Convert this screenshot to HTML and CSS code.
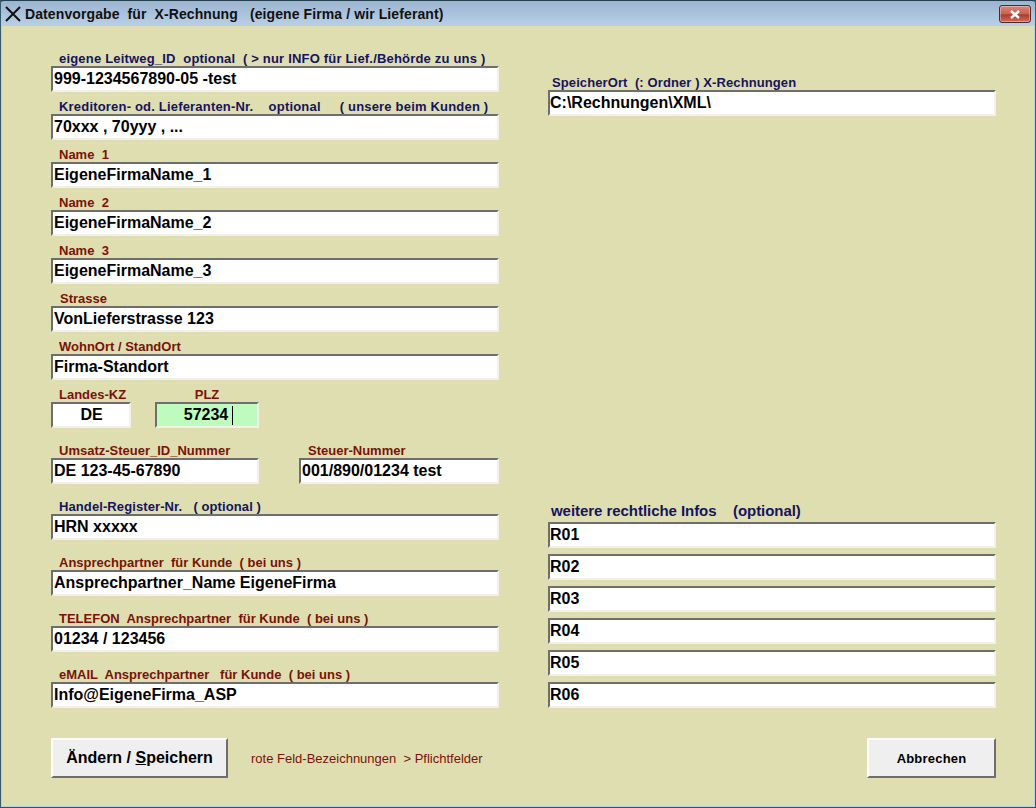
FILE: index.html
```html
<!DOCTYPE html>
<html lang="de">
<head>
<meta charset="utf-8">
<title>Datenvorgabe für X-Rechnung</title>
<link rel="stylesheet" href="styles.css">
</head>
<body>
<div class="window">
  <header class="titlebar">
    <svg class="app-icon" width="18" height="18" viewBox="0 0 18 18"><path d="M2 2 L16 16 M16 2 L2 16" stroke="#111" stroke-width="2" fill="none"/></svg>
    <span class="title">Datenvorgabe  für  X-Rechnung   (eigene Firma / wir Lieferant)</span>
    <div class="close"><svg width="14" height="9" viewBox="0 0 14 9"><path d="M3 1 L11 8 M11 1 L3 8" stroke="#fff" stroke-width="2.4" fill="none"/></svg></div>
  </header>
  <main class="client">
    <div class="columns">
      <section class="col">
        <div class="group"><label class="lbl opt">eigene Leitweg_ID  optional  ( &gt; nur INFO für Lief./Behörde zu uns )</label><div class="field">999-1234567890-05 -test</div></div>
        <div class="group"><label class="lbl opt">Kreditoren- od. Lieferanten-Nr.    optional     ( unsere beim Kunden )</label><div class="field">70xxx , 70yyy , ...</div></div>
        <div class="group"><label class="lbl req">Name  1</label><div class="field">EigeneFirmaName_1</div></div>
        <div class="group"><label class="lbl req">Name  2</label><div class="field">EigeneFirmaName_2</div></div>
        <div class="group"><label class="lbl req">Name  3</label><div class="field">EigeneFirmaName_3</div></div>
        <div class="group"><label class="lbl req nudge">Strasse</label><div class="field">VonLieferstrasse 123</div></div>
        <div class="group"><label class="lbl req">WohnOrt / StandOrt</label><div class="field">Firma-Standort</div></div>
        <div class="row row-plz">
          <div class="group w-land"><label class="lbl req">Landes-KZ</label><div class="field center">DE</div></div>
          <div class="group w-plz"><label class="lbl req center-lbl">PLZ</label><div class="field center active">57234<span class="caret"></span></div></div>
        </div>
        <div class="row row-ust spaced">
          <div class="group w-ust"><label class="lbl req">Umsatz-Steuer_ID_Nummer</label><div class="field">DE 123-45-67890</div></div>
          <div class="group w-st"><label class="lbl req nudge">Steuer-Nummer</label><div class="field">001/890/01234 test</div></div>
        </div>
        <div class="group spaced"><label class="lbl opt tight">Handel-Register-Nr.   ( optional )</label><div class="field">HRN xxxxx</div></div>
        <div class="group spaced"><label class="lbl req">Ansprechpartner  für Kunde  ( bei uns )</label><div class="field">Ansprechpartner_Name EigeneFirma</div></div>
        <div class="group spaced"><label class="lbl req">TELEFON  Ansprechpartner  für Kunde  ( bei uns )</label><div class="field">01234 / 123456</div></div>
        <div class="group spaced"><label class="lbl req">eMAIL  Ansprechpartner   für Kunde  ( bei uns )</label><div class="field">Info@EigeneFirma_ASP</div></div>
      </section>
      <section class="col col-right">
        <div class="group store"><label class="lbl opt tight nudge-s">SpeicherOrt  (: Ordner ) X-Rechnungen</label><div class="field field-r">C:\Rechnungen\XML\</div></div>
        <div class="legal">
          <h2 class="legal-head">weitere rechtliche Infos    (optional)</h2>
          <div class="legal-list">
            <div class="field field-r">R01</div>
            <div class="field field-r">R02</div>
            <div class="field field-r">R03</div>
            <div class="field field-r">R04</div>
            <div class="field field-r">R05</div>
            <div class="field field-r">R06</div>
          </div>
        </div>
      </section>
    </div>
    <footer class="actions">
      <button class="btn btn-save" type="button">Ändern / <u>S</u>peichern</button>
      <span class="hint">rote Feld-Bezeichnungen  &gt; Pflichtfelder</span>
      <button class="btn btn-cancel" type="button">Abbrechen</button>
    </footer>
  </main>
</div>
</body>
</html>
```

FILE: styles.css
```css
* { box-sizing: border-box; }
html, body { margin: 0; padding: 0; }
body { width: 1036px; height: 808px; overflow: hidden; font-family: "Liberation Sans", Arial, sans-serif; background: #2f5a6a; }
.window { width: 1036px; height: 808px; display: flex; flex-direction: column; border-top: 1px solid #24404f; background: linear-gradient(#9db4cf, #b9d1e8 26px); border-radius: 3px 3px 0 0; padding: 0 2px 2px 2px; box-shadow: inset 1px 0 0 #3a5a6a, inset -1px 0 0 #3a5a6a, inset 0 -1px 0 #2c5566; }
.titlebar { height: 25px; flex: none; display: flex; align-items: center; margin: 0 -2px; padding: 0 12px 0 4px; position: relative; }
.app-icon { flex: none; margin-right: 3px; }
.title { font-size: 14px; font-weight: bold; white-space: pre; color: #111; letter-spacing: 0.1px; margin-top: 1px; }
.close { position: absolute; right: 5px; top: 4px; width: 32px; height: 18px; border: 1px solid #4a2a2a; border-radius: 3px; background: linear-gradient(#d9897c, #c8604f 50%, #b03a28 55%, #c9705f); display: flex; align-items: center; justify-content: center; box-shadow: inset 0 0 0 1px rgba(255,255,255,.35); }
.client { flex: 1; min-height: 0; background: #dfdeb0; padding: 18px 0 0 49px; display: flex; flex-direction: column; position: relative; }
.columns { display: flex; gap: 49px; }
.col { width: 448px; display: flex; flex-direction: column; flex: none; }
.group { display: flex; flex-direction: column; }
.lbl { height: 22px; line-height: 15px; padding-top: 7px; padding-left: 8px; font-size: 13px; font-weight: bold; white-space: pre; }
.opt { color: #14145f; letter-spacing: 0.19px; }
.tight { letter-spacing: 0.1px; }
.req { color: #7a1208; letter-spacing: 0; }
.nudge { padding-left: 9px; }
.nudge-s { padding-left: 4px; }
.center-lbl { padding-left: 0; text-align: center; }
.field { height: 26px; line-height: 21px; padding: 0 0 0 1px; font-size: 16px; font-weight: bold; color: #000; background: #fff; white-space: pre; border-top: 2px solid #6e6e6e; border-left: 2px solid #6e6e6e; border-right: 2px solid #f1f1ea; border-bottom: 2px solid #f1f1ea; }
.center { text-align: center; }
.active { background: #bdfcbd; position: relative; padding-right: 3px; }
.caret { position: absolute; left: 75px; top: 2px; width: 1px; height: 19px; background: #000; }
.row { display: flex; }
.spaced { margin-top: 8px; }
.row-plz { gap: 24px; }
.w-land { width: 80px; }
.w-plz { width: 104px; }
.row-ust { gap: 40px; }
.w-ust { width: 208px; }
.w-st { width: 200px; }
.store { margin-top: 24px; }
.legal { margin-top: 382px; }
.legal-head { margin: 0; height: 22px; line-height: 19px; padding: 3px 0 0 3px; font-size: 15px; font-weight: bold; color: #14145f; white-space: pre; letter-spacing: -0.05px; }
.legal-list { display: flex; flex-direction: column; gap: 6px; margin-top: 2px; }
.field-r { padding-left: 0; }
.actions { margin-top: 30px; display: flex; align-items: center; }
.btn { height: 40px; padding: 0; font-family: inherit; font-weight: bold; color: #000; background: #efefef; border-top: 2px solid #fbfbfb; border-left: 2px solid #fbfbfb; border-right: 2px solid #6e6e6e; border-bottom: 2px solid #6e6e6e; }
.btn-save { width: 177px; font-size: 16px; }
.btn-cancel { width: 129px; font-size: 13px; margin-left: 362px; letter-spacing: 0.2px; }
.hint { margin-left: 23px; width: 254px; font-size: 13px; color: #7a1208; white-space: pre; }
```
